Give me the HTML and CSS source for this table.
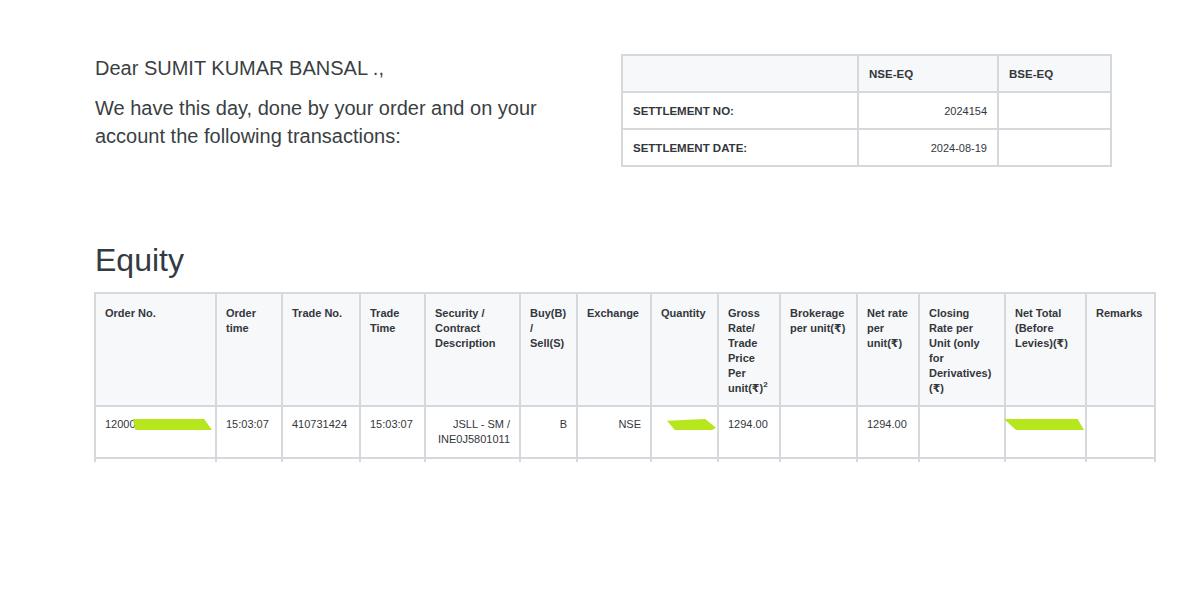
FILE: index.html
```html
<!DOCTYPE html>
<html>
<head>
<meta charset="utf-8">
<link rel="stylesheet" href="styles.css">
</head>
<body>
<div class="page">
  <div class="top">
    <div class="greeting">
      <p class="dear">Dear SUMIT KUMAR BANSAL .,</p>
      <p class="intro">We have this day, done by your order and on your account the following transactions:</p>
    </div>
    <table class="settle">
      <tr class="settle-head">
        <th class="c-label"></th>
        <th class="c-nse">NSE-EQ</th>
        <th class="c-bse">BSE-EQ</th>
      </tr>
      <tr>
        <th>SETTLEMENT NO:</th>
        <td class="num">2024154</td>
        <td></td>
      </tr>
      <tr>
        <th>SETTLEMENT DATE:</th>
        <td class="num">2024-08-19</td>
        <td></td>
      </tr>
    </table>
  </div>

  <h2 class="section-title">Equity</h2>

  <div class="clip">
    <table class="trades">
      <colgroup>
        <col class="w1"><col class="w2"><col class="w3"><col class="w4"><col class="w5"><col class="w6"><col class="w7">
        <col class="w8"><col class="w9"><col class="w10"><col class="w11"><col class="w12"><col class="w13"><col class="w14">
      </colgroup>
      <thead>
        <tr>
          <th>Order No.</th>
          <th>Order time</th>
          <th>Trade No.</th>
          <th>Trade Time</th>
          <th>Security / Contract Description</th>
          <th>Buy(B) / Sell(S)</th>
          <th>Exchange</th>
          <th>Quantity</th>
          <th>Gross Rate/ Trade Price Per unit(₹)<sup>2</sup></th>
          <th>Brokerage per unit(₹)</th>
          <th>Net rate per unit(₹)</th>
          <th>Closing Rate per Unit (only for Derivatives) (₹)</th>
          <th>Net Total (Before Levies)(₹)</th>
          <th>Remarks</th>
        </tr>
      </thead>
      <tbody>
        <tr class="data">
          <td class="redacted-cell">12000<span class="mark mark-order"></span></td>
          <td>15:03:07</td>
          <td>410731424</td>
          <td>15:03:07</td>
          <td class="right">JSLL - SM / INE0J5801011</td>
          <td class="right">B</td>
          <td class="right">NSE</td>
          <td class="redacted-cell"><span class="mark mark-qty"></span></td>
          <td>1294.00</td>
          <td></td>
          <td>1294.00</td>
          <td></td>
          <td class="redacted-cell"><span class="mark mark-total"></span></td>
          <td></td>
        </tr>
        <tr class="data">
          <td></td><td></td><td></td><td></td><td></td><td></td><td></td>
          <td></td><td></td><td></td><td></td><td></td><td></td><td></td>
        </tr>
      </tbody>
    </table>
  </div>
</div>
</body>
</html>
```

FILE: styles.css
```css
html, body {
  margin: 0;
  padding: 0;
  background: #ffffff;
}

body {
  font-family: "Liberation Sans", Arial, "DejaVu Sans", sans-serif;
  color: #3a3f44;
}

.page {
  padding: 54px 0 0 94px;
}

.top {
  display: flex;
  align-items: flex-start;
}

.greeting {
  flex: 0 0 526px;
  padding-left: 1px;
}

.greeting p {
  margin: 0;
  font-size: 20px;
  line-height: 28px;
  width: 460px;
}

.intro {
  margin-top: 12px !important;
}

.settle {
  margin-top: 0;
  width: 491px;
  border-collapse: collapse;
  border: 2px solid #d5d9dd;
  font-size: 11.5px;
  color: #33373c;
}

.settle th,
.settle td {
  border: 2px solid #d5d9dd;
  height: 35px;
  padding: 0 10px;
  text-align: left;
  vertical-align: middle;
}

.settle th {
  font-weight: bold;
}

.settle .c-label { width: 214px; }
.settle .c-nse { width: 118px; }

.settle-head th {
  background: #f7f8fa;
}

.settle td.num {
  text-align: right;
  font-size: 11px;
}

.section-title {
  margin: 73px 0 0 1px;
  font-size: 32px;
  line-height: 40px;
  font-weight: normal;
  color: #333a44;
}

.clip {
  margin-top: 12px;
  width: 1063px;
  height: 170px;
  overflow: hidden;
}

.trades {
  table-layout: fixed;
  width: 1061px;
  border-collapse: collapse;
  border: 2px solid #d5d9dd;
  font-size: 11px;
  color: #33373c;
}

.trades col.w1 { width: 121px; }
.trades col.w2 { width: 66px; }
.trades col.w3 { width: 78px; }
.trades col.w4 { width: 65px; }
.trades col.w5 { width: 95px; }
.trades col.w6 { width: 57px; }
.trades col.w7 { width: 74px; }
.trades col.w8 { width: 67px; }
.trades col.w9 { width: 62px; }
.trades col.w10 { width: 77px; }
.trades col.w11 { width: 62px; }
.trades col.w12 { width: 86px; }
.trades col.w13 { width: 81px; }
.trades col.w14 { width: 69px; }

.trades th,
.trades td {
  border: 2px solid #d5d9dd;
  vertical-align: top;
  text-align: left;
  line-height: 15px;
}

.trades th {
  background: #f7f8fa;
  font-weight: bold;
  padding: 12px 9px 9px 9px;
  height: 90px;
}

.trades th sup {
  font-size: 8px;
  line-height: 0;
  vertical-align: 5px;
}

.trades td {
  padding: 10px 9px 10px 9px;
  height: 30px;
}

.trades td.right {
  text-align: right;
}

.redacted-cell {
  position: relative;
}

.mark {
  position: absolute;
  background: #b6e61c;
  height: 11px;
}

.mark-order {
  left: 37px;
  top: 12px;
  width: 79px;
  clip-path: polygon(0 0, 90% 0, 100% 100%, 3% 100%);
}

.mark-qty {
  left: 15px;
  top: 12px;
  width: 49px;
  clip-path: polygon(0 15%, 78% 0, 100% 80%, 92% 100%, 16% 100%);
}

.mark-total {
  left: -2px;
  top: 12px;
  width: 80px;
  clip-path: polygon(0 0, 92% 0, 100% 100%, 15% 100%);
}
```
